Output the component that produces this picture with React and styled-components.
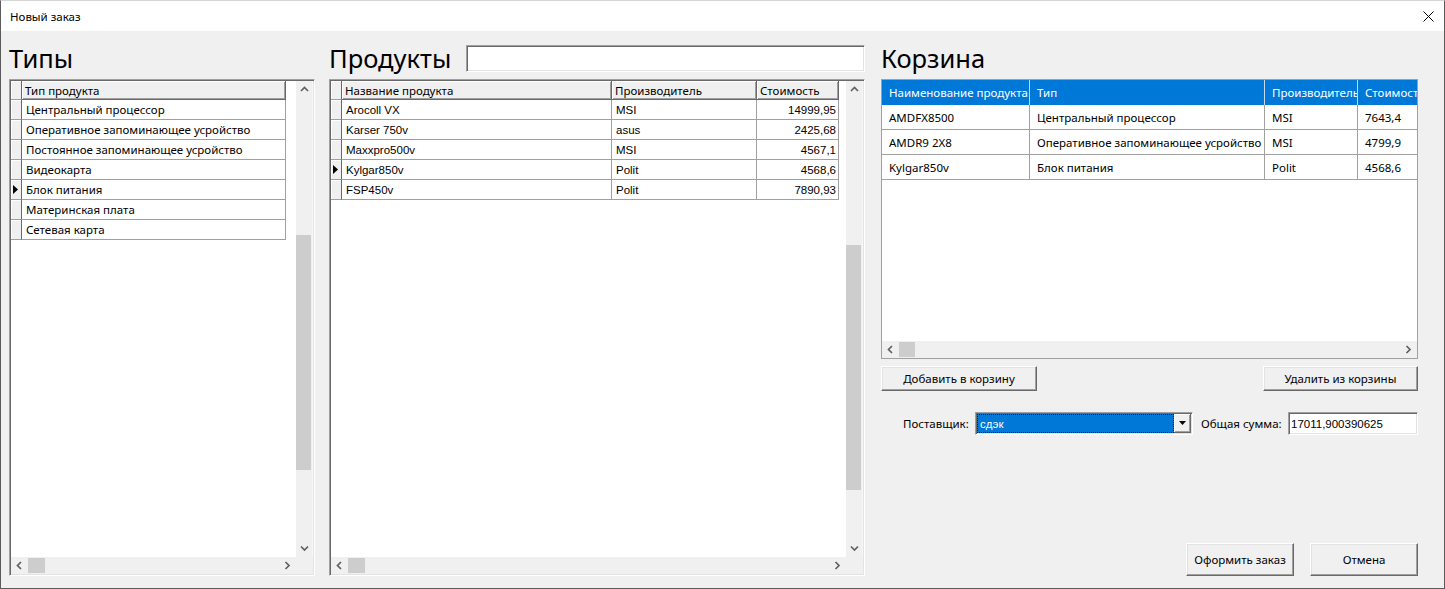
import React from 'react';
import styled, { createGlobalStyle } from 'styled-components';

const SEGOE = `"Noto Sans", "Open Sans", sans-serif`;
const MSSANS = `"Liberation Sans", Arial, sans-serif`;
const UI_SIZE = 11.5;

const types = [
  'Центральный процессор',
  'Оперативное запоминающее усройство',
  'Постоянное запоминающее усройство',
  'Видеокарта',
  'Блок питания',
  'Материнская плата',
  'Сетевая карта',
];

const products = [
  { name: 'Arocoll VX', maker: 'MSI', price: '14999,95' },
  { name: 'Karser 750v', maker: 'asus', price: '2425,68' },
  { name: 'Maxxpro500v', maker: 'MSI', price: '4567,1' },
  { name: 'Kylgar850v', maker: 'Polit', price: '4568,6' },
  { name: 'FSP450v', maker: 'Polit', price: '7890,93' },
];

const basketCols = [
  { title: 'Наименование продукта', w: 148 },
  { title: 'Тип', w: 235 },
  { title: 'Производитель', w: 93 },
  { title: 'Стоимость', w: 80 },
];

const basket = [
  ['AMDFX8500', 'Центральный процессор', 'MSI', '7643,4'],
  ['AMDR9 2X8', 'Оперативное запоминающее усройство', 'MSI', '4799,9'],
  ['Kylgar850v', 'Блок питания', 'Polit', '4568,6'],
];

const GlobalStyle = createGlobalStyle`
  html, body {
    margin: 0;
    padding: 0;
  }
  body {
    background: #fff;
    font-family: ${SEGOE};
    font-size: ${UI_SIZE}px;
    color: #000;
  }
  *, *::before, *::after {
    box-sizing: border-box;
  }
`;

// window chrome
const Window = styled.div`
  width: 1445px;
  height: 589px;
  display: flex;
  flex-direction: column;
  border: 1px solid #5b5b5b;
  border-top-color: #d6d6d6;
  background: #f0f0f0;
  overflow: hidden;
`;

const TitleBar = styled.div`
  flex: none;
  height: 30px;
  display: flex;
  align-items: center;
  justify-content: space-between;
  padding: 0 1px 0 9px;
  background: #fff;
`;

const TitleText = styled.span`
  font-size: ${UI_SIZE}px;
`;

const CloseBox = styled.div`
  width: 30px;
  height: 30px;
  display: flex;
  align-items: center;
  justify-content: center;
`;

const Body = styled.div`
  flex: 1;
  display: flex;
  padding: 10px 26px 12px 8px;
`;

const Column = styled.div`
  flex: none;
  width: ${(p) => p.$w}px;
  margin-right: ${(p) => p.$mr || 0}px;
  display: flex;
  flex-direction: column;
`;

const HeadingRow = styled.div`
  flex: none;
  height: 34px;
  margin-bottom: 4px;
  display: flex;
  align-items: center;
  justify-content: space-between;
`;

const Heading = styled.h2`
  margin: 0;
  font-size: 25.5px;
  font-weight: 400;
  line-height: 34px;
`;

const SunkenBox = styled.div`
  border: 1px solid;
  border-color: #a0a0a0 #fff #fff #a0a0a0;
  box-shadow: inset 1px 1px #696969, inset -1px -1px #e3e3e3;
  padding: 1px;
  background: #fff;
`;

const SearchInput = styled(SunkenBox)`
  width: 399px;
  height: 27px;
`;

// grid frames
const GridFrame = styled(SunkenBox)`
  flex: 1;
  display: grid;
  grid-template-columns: 1fr 17px;
  grid-template-rows: 1fr 17px;
  min-height: 0;
`;

const BasketFrame = styled.div`
  flex: none;
  height: 280px;
  display: grid;
  grid-template-rows: 1fr 17px;
  border: 1px solid #a0a0a0;
  background: #fff;
`;

const Viewport = styled.div`
  overflow: hidden;
  background: #fff;
`;

const Row = styled.div`
  display: flex;
  height: ${(p) => p.$h}px;
`;

const RaisedCell = styled.div`
  flex: none;
  width: ${(p) => p.$w}px;
  height: 100%;
  background: #f0f0f0;
  border-right: 1px solid #696969;
  border-bottom: 1px solid #696969;
  box-shadow: inset 1px 1px #fff, inset -1px -1px #a0a0a0;
  display: flex;
  align-items: center;
`;

const HeaderCell = styled(RaisedCell)`
  padding-left: 3px;
  font-family: ${SEGOE};
  font-size: ${UI_SIZE}px;
  white-space: nowrap;
  overflow: hidden;
`;

const RowHeader = styled(RaisedCell)`
  justify-content: center;
  padding-right: 1px;
  border-bottom-color: #a0a0a0;
  box-shadow: inset 1px 1px #fff;
`;

const Cell = styled.div`
  flex: none;
  width: ${(p) => p.$w}px;
  height: 100%;
  padding: 0 ${(p) => (p.$right ? 2 : 3)}px 0 ${(p) => (p.$right ? 2 : 4)}px;
  border-right: 1px solid #a0a0a0;
  border-bottom: 1px solid #a0a0a0;
  display: flex;
  align-items: center;
  justify-content: ${(p) => (p.$right ? 'flex-end' : 'flex-start')};
  font-family: ${(p) => (p.$classic ? MSSANS : SEGOE)};
  font-size: ${(p) => (p.$classic ? 11.5 : UI_SIZE)}px;
  white-space: nowrap;
  overflow: hidden;
`;

const BasketHeadCell = styled.div`
  flex: none;
  width: ${(p) => p.$w}px;
  height: 100%;
  padding-left: 7px;
  background: #0078d7;
  color: #fff;
  border-right: 1px solid #c9d9ea;
  display: flex;
  align-items: center;
  white-space: nowrap;
  overflow: hidden;
`;

const BasketCell = styled(Cell)`
  padding-left: 7px;
`;

// scrollbars
const VBar = styled.div`
  display: flex;
  flex-direction: column;
  background: #f0f0f0;
  border-right: 1px solid #f7f7f7;
`;

const HBar = styled.div`
  display: flex;
  background: #f0f0f0;
`;

const ArrowBox = styled.div`
  flex: none;
  width: 17px;
  height: 17px;
  display: flex;
  align-items: center;
  justify-content: center;
`;

const Lane = styled.div`
  flex: 1;
  display: flex;
  flex-direction: ${(p) => (p.$vertical ? 'column' : 'row')};
`;

const VThumb = styled.div`
  flex: none;
  width: 15px;
  height: ${(p) => p.$size}px;
  margin-top: ${(p) => p.$offset}px;
  background: #cdcdcd;
`;

const HThumb = styled.div`
  flex: none;
  height: 15px;
  width: ${(p) => p.$size}px;
  margin-left: ${(p) => p.$offset}px;
  margin-top: 1px;
  background: #cdcdcd;
`;

const Corner = styled.div`
  background: #f0f0f0;
`;

// controls
const Button = styled.button`
  width: ${(p) => p.$w}px;
  height: ${(p) => p.$h}px;
  padding: 0;
  font-family: ${SEGOE};
  font-size: ${UI_SIZE}px;
  color: #000;
  background: #f0f0f0;
  border: 1px solid;
  border-color: #fff #696969 #696969 #fff;
  box-shadow: inset -1px -1px #a0a0a0, inset 1px 1px #e3e3e3;
`;

const ButtonRow = styled.div`
  flex: none;
  display: flex;
  justify-content: ${(p) => p.$justify || 'space-between'};
  gap: 16px;
  margin-top: ${(p) => p.$mt || 0}px;
`;

const SupplierRow = styled.div`
  flex: none;
  height: 23px;
  margin-top: 21px;
  padding-left: 22px;
  display: flex;
  align-items: center;
`;

const Label = styled.span`
  width: ${(p) => p.$w}px;
  margin-left: ${(p) => p.$ml || 0}px;
  font-size: ${UI_SIZE}px;
  white-space: nowrap;
`;

const Combo = styled(SunkenBox)`
  width: 218px;
  height: 23px;
  display: flex;
`;

const ComboValue = styled.div`
  flex: 1;
  background: #0078d7;
  color: #fff;
  border: 1px dotted #1a1a1a;
  padding-left: 2px;
  display: flex;
  align-items: center;
  font-family: ${MSSANS};
  font-size: 11.5px;
`;

const ComboButton = styled.div`
  flex: none;
  width: 17px;
  background: #f0f0f0;
  border-right: 1px solid #696969;
  border-bottom: 1px solid #696969;
  box-shadow: inset 1px 1px #fff, inset -1px -1px #a0a0a0;
  display: flex;
  align-items: center;
  justify-content: center;
`;

const TextBox = styled(SunkenBox)`
  width: 130px;
  height: 23px;
  display: flex;
  align-items: center;
  padding-left: 2px;
  font-family: ${MSSANS};
  font-size: 11.5px;
`;

const Spacer = styled.div`
  flex: 1;
`;

const Chevron = ({ dir }) => {
  const paths = {
    up: 'M1 5 L4.5 1.5 L8 5',
    down: 'M1 1.5 L4.5 5 L8 1.5',
    left: 'M5 1 L1.5 4.5 L5 8',
    right: 'M1.5 1 L5 4.5 L1.5 8',
  };
  const vertical = dir === 'up' || dir === 'down';
  const w = vertical ? 9 : 7;
  const h = vertical ? 7 : 9;
  return (
    <svg width={w} height={h} viewBox={`0 0 ${w} ${h}`}>
      <path d={paths[dir]} fill="none" stroke="#606060" strokeWidth="1.7" />
    </svg>
  );
};

const Pointer = () => (
  <svg width="5" height="9" viewBox="0 0 5 9">
    <polygon points="0,0 5,4.5 0,9" fill="#000" />
  </svg>
);

const VScroll = ({ offset, size }) => (
  <VBar>
    <ArrowBox>
      <Chevron dir="up" />
    </ArrowBox>
    <Lane $vertical>
      <VThumb $offset={offset} $size={size} />
    </Lane>
    <ArrowBox>
      <Chevron dir="down" />
    </ArrowBox>
  </VBar>
);

const HScroll = ({ offset = 0, size = 17 }) => (
  <HBar>
    <ArrowBox>
      <Chevron dir="left" />
    </ArrowBox>
    <Lane>
      <HThumb $offset={offset} $size={size} />
    </Lane>
    <ArrowBox>
      <Chevron dir="right" />
    </ArrowBox>
  </HBar>
);

const App = () => {
  return (
    <>
      <GlobalStyle />
      <Window>
        <TitleBar>
          <TitleText>Новый заказ</TitleText>
          <CloseBox>
            <svg width="11" height="11" viewBox="0 0 11 11">
              <path d="M0.5 0.5 L10.5 10.5 M10.5 0.5 L0.5 10.5" stroke="#000" strokeWidth="1" />
            </svg>
          </CloseBox>
        </TitleBar>

        <Body>
          <Column $w={306} $mr={14}>
            <HeadingRow>
              <Heading>Типы</Heading>
            </HeadingRow>
            <GridFrame>
              <Viewport>
                <Row $h={19}>
                  <RowHeader $w={11} />
                  <HeaderCell $w={264}>Тип продукта</HeaderCell>
                </Row>
                {types.map((t, i) => (
                  <Row $h={20} key={t}>
                    <RowHeader $w={11}>{i === 4 && <Pointer />}</RowHeader>
                    <Cell $w={264}>{t}</Cell>
                  </Row>
                ))}
              </Viewport>
              <VScroll offset={137} size={235} />
              <HScroll />
              <Corner />
            </GridFrame>
          </Column>

          <Column $w={536} $mr={16}>
            <HeadingRow>
              <Heading>Продукты</Heading>
              <SearchInput />
            </HeadingRow>
            <GridFrame>
              <Viewport>
                <Row $h={19}>
                  <RowHeader $w={11} />
                  <HeaderCell $w={270}>Название продукта</HeaderCell>
                  <HeaderCell $w={145}>Производитель</HeaderCell>
                  <HeaderCell $w={82}>Стоимость</HeaderCell>
                </Row>
                {products.map((p, i) => (
                  <Row $h={20} key={p.name}>
                    <RowHeader $w={11}>{i === 3 && <Pointer />}</RowHeader>
                    <Cell $w={270} $classic>{p.name}</Cell>
                    <Cell $w={145} $classic>{p.maker}</Cell>
                    <Cell $w={82} $classic $right>{p.price}</Cell>
                  </Row>
                ))}
              </Viewport>
              <VScroll offset={147} size={245} />
              <HScroll />
              <Corner />
            </GridFrame>
          </Column>

          <Column $w={537}>
            <HeadingRow>
              <Heading>Корзина</Heading>
            </HeadingRow>
            <BasketFrame>
              <Viewport>
                <Row $h={25}>
                  {basketCols.map((c) => (
                    <BasketHeadCell $w={c.w} key={c.title}>{c.title}</BasketHeadCell>
                  ))}
                </Row>
                {basket.map((r) => (
                  <Row $h={25} key={r[0]}>
                    {r.map((v, j) => (
                      <BasketCell $w={basketCols[j].w} key={j}>{v}</BasketCell>
                    ))}
                  </Row>
                ))}
              </Viewport>
              <HScroll size={16} />
            </BasketFrame>

            <ButtonRow $mt={7}>
              <Button $w={156} $h={25}>Добавить в корзину</Button>
              <Button $w={155} $h={25}>Удалить из корзины</Button>
            </ButtonRow>

            <SupplierRow>
              <Label $w={72}>Поставщик:</Label>
              <Combo>
                <ComboValue>сдэк</ComboValue>
                <ComboButton>
                  <svg width="7" height="4" viewBox="0 0 7 4">
                    <polygon points="0,0 7,0 3.5,4" fill="#000" />
                  </svg>
                </ComboButton>
              </Combo>
              <Label $w={87} $ml={8}>Общая сумма:</Label>
              <TextBox>17011,900390625</TextBox>
            </SupplierRow>

            <Spacer />

            <ButtonRow $justify="flex-end">
              <Button $w={108} $h={33}>Оформить заказ</Button>
              <Button $w={108} $h={33}>Отмена</Button>
            </ButtonRow>
          </Column>
        </Body>
      </Window>
    </>
  );
};

export default App;
